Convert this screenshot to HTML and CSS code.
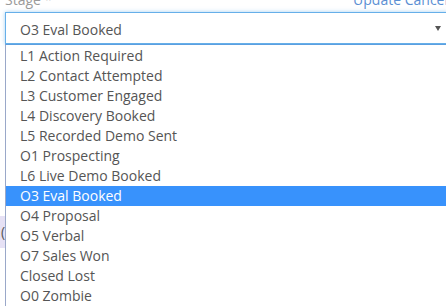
FILE: index.html
```html
<!DOCTYPE html>
<html>
<head>
<meta charset="utf-8">
<link rel="stylesheet" href="styles.css">
</head>
<body>
<div class="form">
  <div class="header">
    <span class="label">Stage *</span>
    <span class="actions"><a class="link">Update</a> <a class="link">Cancel</a></span>
  </div>
  <div class="select-wrap">
    <div class="select">
      <span class="value">O3 Eval Booked</span>
      <span class="arrow"></span>
    </div>
    <ul class="options">
      <li>L1 Action Required</li>
      <li>L2 Contact Attempted</li>
      <li>L3 Customer Engaged</li>
      <li>L4 Discovery Booked</li>
      <li>L5 Recorded Demo Sent</li>
      <li>O1 Prospecting</li>
      <li>L6 Live Demo Booked</li>
      <li class="active">O3 Eval Booked</li>
      <li>O4 Proposal</li>
      <li>O5 Verbal</li>
      <li>O7 Sales Won</li>
      <li>Closed Lost</li>
      <li>O0 Zombie</li>
    </ul>
  </div>
  <div class="below">
    <div class="chip">(Owner)</div>
  </div>
</div>
</body>
</html>
```
FILE: styles.css
```css
html, body {
  margin: 0;
  padding: 0;
  background: #fff;
  overflow: hidden;
  width: 446px;
  height: 306px;
}
body {
  font-family: "Open Sans", "Liberation Sans", sans-serif;
  font-size: 14px;
  color: #555;
}
.form {
  width: 443px;
  margin-left: 5px;
}
.header {
  display: flex;
  height: 20px;
  line-height: 20px;
  margin-top: -10px;
  margin-bottom: 2px;
}
.label {
  color: #9a9a9a;
}
.actions {
  margin-left: auto;
  color: #5b8fd3;
  white-space: nowrap;
}
.select-wrap {
  position: relative;
}
.select {
  box-sizing: border-box;
  height: 32px;
  border: 1px solid #66afe9;
  box-shadow: 0 0 4px rgba(102, 175, 233, 0.6);
  display: flex;
  align-items: center;
  padding: 2px 6px 0 14px;
  background: #fff;
}
.value {
  flex: 1;
  color: #555;
}
.arrow {
  width: 0;
  height: 0;
  border-left: 3px solid transparent;
  border-right: 3px solid transparent;
  border-top: 5px solid #555;
  margin-top: -2px;
}
.options {
  position: absolute;
  top: 100%;
  left: 0;
  right: -10px;
  margin: 0;
  padding: 1px 0 0 0;
  list-style: none;
  background: #fff;
  border-top: 1px solid #5b9fe0;
  border-left: 1px solid #9aa8c9;
  z-index: 2;
}
.options li {
  height: 20px;
  line-height: 20px;
  padding-left: 14px;
  white-space: nowrap;
}
.options li.active {
  background: #3892fc;
  color: #fff;
}
.below {
  padding-top: 172px;
  margin-left: -7px;
}
.chip {
  width: fit-content;
  height: 32px;
  line-height: 32px;
  padding: 0 10px 0 3px;
  background: #e6e1f5;
  color: #555;
}
```
